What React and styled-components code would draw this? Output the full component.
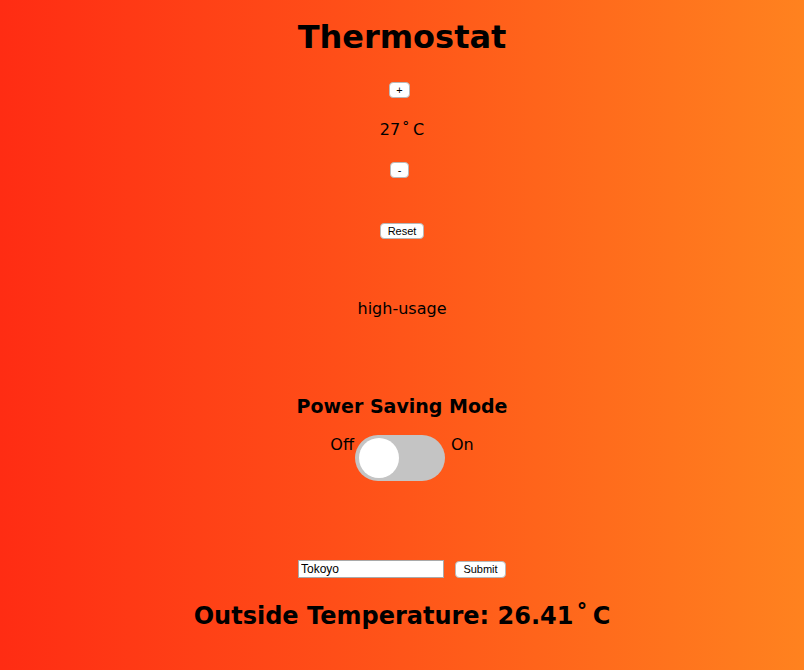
import React, { useState } from 'react';
import styled, { createGlobalStyle } from 'styled-components';

const GlobalStyle = createGlobalStyle`
  html, body {
    margin: 0;
    padding: 0;
  }
  body {
    font-family: "DejaVu Sans", Verdana, sans-serif;
    color: #000;
    background: linear-gradient(to right, #ff2c13 0%, #ff5519 50%, #ff821f 100%);
    min-height: 100vh;
  }
`;

const Page = styled.div`
  display: flex;
  flex-direction: column;
  align-items: center;
  min-height: 100vh;
  text-align: center;
`;

const Title = styled.h1`
  margin: 18px 0 0;
  font-size: 32px;
  line-height: 38px;
  font-weight: bold;
`;

const SmallButton = styled.button`
  margin-top: ${(p) => p.$top}px;
  margin-right: ${(p) => p.$shift || 0}px;
  height: 16px;
  min-width: ${(p) => p.$width}px;
  padding: 0 6px;
  font-family: "Liberation Sans", Arial, sans-serif;
  font-size: 11px;
  line-height: 14px;
  color: #000;
  background: #fff;
  border: 1px solid #b8b8b8;
  border-radius: 4px;
  cursor: pointer;
`;

const Reading = styled.div`
  margin-top: ${(p) => p.$top}px;
  font-size: 16px;
  line-height: 20px;
`;

const SubTitle = styled.h3`
  margin: 75px 0 0;
  font-size: 19px;
  line-height: 24px;
  font-weight: bold;
`;

const ToggleRow = styled.div`
  margin-top: 17px;
  display: flex;
  align-items: flex-start;
  font-size: 16px;
  line-height: 20px;
`;

const Label = styled.span`
  margin: 0 ${(p) => (p.$side === 'left' ? 1 : 0)}px 0 ${(p) => (p.$side === 'right' ? 6 : 0)}px;
`;

const Track = styled.div`
  position: relative;
  width: 90px;
  height: 46px;
  border-radius: 23px;
  background: #c4c4c4;
  cursor: pointer;
`;

const Knob = styled.div`
  position: absolute;
  top: 3px;
  left: ${(p) => (p.$on ? 47 : 4)}px;
  width: 40px;
  height: 40px;
  border-radius: 50%;
  background: #fff;
  transition: left 0.2s;
`;

const CityForm = styled.form`
  margin-top: 79px;
  display: flex;
  align-items: center;
  gap: 11px;
`;

const CityInput = styled.input`
  box-sizing: border-box;
  width: 146px;
  height: 18px;
  padding: 0 2px;
  font-family: "Liberation Sans", Arial, sans-serif;
  font-size: 12px;
  color: #000;
  background: #fff;
  border: 1px solid #a9a9a9;
  outline: none;
`;

const SubmitButton = styled(SmallButton)`
  margin-top: 0;
  height: 17px;
  width: 51px;
`;

const Outside = styled.h2`
  margin: 23px 0 0;
  font-size: 24px;
  line-height: 30px;
  font-weight: bold;
`;

export default function App() {
  const [temp, setTemp] = useState(27);
  const [saving, setSaving] = useState(false);
  const [city, setCity] = useState('Tokoyo');

  const usage = temp < 18 ? 'low-usage' : temp < 25 ? 'medium-usage' : 'high-usage';

  return (
    <>
      <GlobalStyle />
      <Page>
        <Title>Thermostat</Title>
        <SmallButton $top={26} $width={21} $shift={5} onClick={() => setTemp(temp + 1)}>+</SmallButton>
        <Reading $top={22}>{temp}{'\u200A˚\u2009'}C</Reading>
        <SmallButton $top={22} $width={19} $shift={5} onClick={() => setTemp(temp - 1)}>-</SmallButton>
        <SmallButton $top={45} $width={44} onClick={() => setTemp(20)}>Reset</SmallButton>
        <Reading $top={60}>{usage}</Reading>
        <SubTitle>Power Saving Mode</SubTitle>
        <ToggleRow>
          <Label $side="left">Off</Label>
          <Track onClick={() => setSaving(!saving)}>
            <Knob $on={saving} />
          </Track>
          <Label $side="right">On</Label>
        </ToggleRow>
        <CityForm onSubmit={(e) => e.preventDefault()}>
          <CityInput value={city} onChange={(e) => setCity(e.target.value)} />
          <SubmitButton type="submit">Submit</SubmitButton>
        </CityForm>
        <Outside>Outside Temperature: 26.41{'\u200A˚\u2009'}C</Outside>
      </Page>
    </>
  );
}
